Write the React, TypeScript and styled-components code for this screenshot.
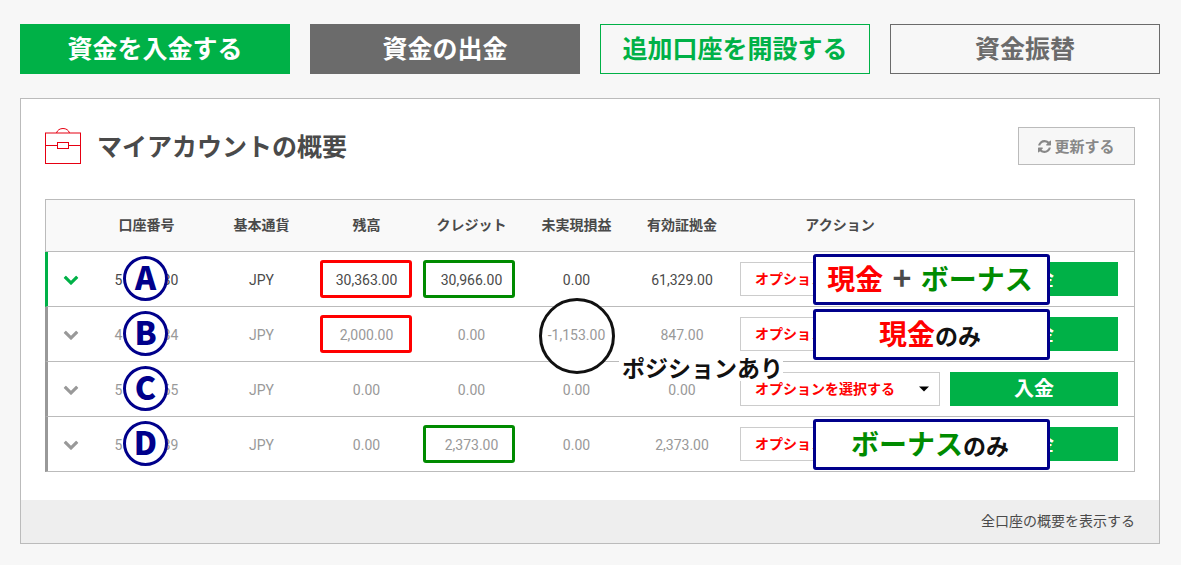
import React from "react";
import styled, { createGlobalStyle } from "styled-components";

const GREEN = "#00b147";
const GREY = "#6b6b6b";
const TEXT = "#4a4a4a";
const MUTED = "#999";
const LINE = "#bbb";
const NAVY = "#00008b";
const RED = "#f00";
const BONUS = "#008b00";

const GlobalStyle = createGlobalStyle`
  *, *::before, *::after { box-sizing: border-box; }
  body {
    margin: 0;
    background: #f7f7f7;
    color: ${TEXT};
    font-family: Roboto, "Noto Sans CJK JP", sans-serif;
    font-size: 14px;
    line-height: 20px;
  }
  button, select { font-family: inherit; cursor: pointer; }
`;

const Page = styled.main`
  padding: 24px 21px 21px 20px;
`;

const Shortcuts = styled.nav`
  display: grid;
  grid-template-columns: repeat(4, 1fr);
  gap: 20px;
  margin-bottom: 24px;
`;

const ShortcutButton = styled.button<{ $color: string; $filled?: boolean }>`
  height: 50px;
  padding: 0 0 4px;
  border: 1px solid ${(p) => p.$color};
  background: ${(p) => (p.$filled ? p.$color : "transparent")};
  color: ${(p) => (p.$filled ? "#fff" : p.$color)};
  font-family: "Noto Sans CJK JP", sans-serif;
  font-size: 25px;
  font-weight: 700;
  line-height: 36px;
`;

const Panel = styled.section`
  border: 1px solid ${LINE};
  background: #fff;
`;

const PanelBody = styled.div`
  padding: 28px 24px;
`;

const PanelHeader = styled.header`
  display: flex;
  align-items: center;
  gap: 16px;
  margin-bottom: 34px;
`;

const Title = styled.h1`
  flex: 1;
  margin: 0;
  padding-bottom: 2px;
  font-family: "Noto Sans CJK JP", sans-serif;
  font-size: 25px;
  font-weight: 700;
  line-height: 36px;
`;

const RefreshButton = styled.button`
  display: flex;
  align-items: center;
  justify-content: center;
  gap: 3px;
  width: 117px;
  height: 38px;
  padding: 0;
  border: 1px solid ${LINE};
  background: #f7f7f7;
  color: #888;
  font-size: 15px;
  font-weight: 700;
`;

const RefreshLabel = styled.span`
  padding-bottom: 2px;
`;

const PanelFooter = styled.footer`
  display: flex;
  align-items: center;
  justify-content: flex-end;
  height: 43px;
  padding: 0 24px 2px;
  background: #eee;
`;

const FooterLink = styled.a`
  color: ${TEXT};
  text-decoration: none;
`;

const AccountsTable = styled.table`
  width: 100%;
  table-layout: fixed;
  border-collapse: separate;
  border-spacing: 0;
  border-top: 1px solid ${LINE};
  border-right: 1px solid ${LINE};
`;

const Column = styled.col<{ $width: number }>`
  width: ${(p) => p.$width}px;
`;

const HeadCell = styled.th`
  height: 52px;
  padding: 0 0 2px;
  border-bottom: 1px solid ${LINE};
  background: #f9f9f9;
  font-weight: 700;
  white-space: nowrap;

  &:first-child { border-left: 1px solid ${LINE}; }
`;

const Row = styled.tr<{ $active?: boolean }>`
  color: ${(p) => (p.$active ? TEXT : MUTED)};
  --accent: ${(p) => (p.$active ? GREEN : MUTED)};
`;

const Cell = styled.td`
  position: relative;
  height: 55px;
  padding: 0;
  border-bottom: 1px solid ${LINE};
  text-align: center;
`;

const DataCell = styled(Cell)`
  padding-top: 2px;
`;

const ToggleCell = styled(Cell)`
  border-left: 3px solid var(--accent);
  text-align: left;
`;

const DepositCell = styled(Cell)`
  padding: 0 16px 0 5px;
`;

const ToggleButton = styled.button`
  display: block;
  margin-left: 15px;
  padding: 0;
  border: 0;
  background: none;
  color: var(--accent);

  svg { display: block; }
`;

const AccountNumber = styled.span`
  display: inline-flex;
  justify-content: space-between;
  width: 64px;
`;

const Badge = styled.span`
  position: absolute;
  top: 4px;
  left: 39px;
  width: 45px;
  height: 45px;
  border: 3px solid ${NAVY};
  border-radius: 50%;
  background: #fff;
  color: ${NAVY};
  font-family: "Noto Sans CJK JP", sans-serif;
  font-size: 32px;
  font-weight: 900;
  line-height: 35px;
`;

const Frame = styled.span<{ $tone: "cash" | "bonus" }>`
  position: absolute;
  top: 8px;
  left: ${(p) => (p.$tone === "cash" ? 6 : 4)}px;
  width: 92px;
  height: 38px;
  border: 3px solid ${(p) => (p.$tone === "cash" ? RED : BONUS)};
  border-radius: 3px;
`;

const Ring = styled.span`
  position: absolute;
  top: -9px;
  left: 15px;
  width: 76px;
  height: 76px;
  border: 3px solid #111;
  border-radius: 50%;
  background: #fff;
`;

const Amount = styled.span`
  position: relative;
  z-index: 1;
`;

const PositionNote = styled.strong`
  position: absolute;
  z-index: 3;
  top: 48px;
  left: 95px;
  padding: 0 0 2px 3px;
  background: #fff;
  color: #111;
  font-family: "Noto Sans CJK JP", sans-serif;
  font-size: 23px;
  font-weight: 700;
  line-height: 24px;
  white-space: nowrap;
`;

const SelectBox = styled.div`
  position: relative;
  margin: 0 5px;

  svg {
    position: absolute;
    top: 14px;
    right: 11px;
    pointer-events: none;
  }
`;

const OptionSelect = styled.select`
  display: block;
  width: 100%;
  height: 34px;
  padding: 0 28px 0 14px;
  appearance: none;
  border: 1px solid #ccc;
  border-radius: 0;
  background: #fff;
  color: ${RED};
  font-size: 14px;
  font-weight: 700;
`;

const DepositButton = styled.button`
  display: block;
  width: 100%;
  height: 34px;
  padding: 0 0 2px;
  border: 0;
  background: ${GREEN};
  color: #fff;
  font-family: "Noto Sans CJK JP", sans-serif;
  font-size: 20px;
  font-weight: 700;
  line-height: 32px;
`;

const Callout = styled.div`
  position: absolute;
  z-index: 2;
  top: 2px;
  left: 78px;
  width: 237px;
  height: 51px;
  padding-right: 3px;
  border: 3px solid ${NAVY};
  border-radius: 3px;
  background: #fff;
  color: ${TEXT};
  font-family: "Noto Sans CJK JP", sans-serif;
  font-size: 28px;
  font-weight: 700;
  line-height: 42px;
  white-space: nowrap;
`;

const Cash = styled.span`
  color: ${RED};
`;

const Bonus = styled.span`
  color: ${BONUS};
`;

const Plus = styled.span`
  margin: 0 3px;
  font-size: 32px;
  line-height: 32px;
`;

const Only = styled.span`
  color: #111;
  font-size: 23px;
`;

const BriefcaseIcon = () => (
  <svg width="36" height="36" viewBox="0 0 36 36" fill="none" stroke="#e60012" aria-hidden="true">
    <path d="M11.5 5C12.3 2 15 .5 18 .5S23.700 2 24.500 5" />
    <rect x="0.500" y="5" width="35" height="30.500" />
    <path d="M0 17.500H12.500M23.500 17.500H36" />
    <rect x="12.500" y="14.500" width="11" height="6" />
  </svg>
);

const RefreshIcon = () => (
  <svg width="13" height="13" viewBox="0 0 1536 1536" fill="currentColor" aria-hidden="true">
    <path d="M1511 928q0 5-1 7-64 268-268 434.500t-478 166.500q-146 0-282.500-55t-243.500-157l-129 129q-19 19-45 19t-45-19-19-45v-448q0-26 19-45t45-19h448q26 0 45 19t19 45-19 45l-137 137q71 66 161 102t187 36q134 0 250-65t186-179q11-17 53-117 8-23 30-23h192q13 0 22.500 9.500t9.500 22.500zm25-800v448q0 26-19 45t-45 19h-448q-26 0-45-19t-19-45 19-45l138-138q-148-137-349-137-134 0-250 65t-186 179q-11 17-53 117-8 23-30 23h-199q-13 0-22.500-9.500t-9.500-22.500v-7q65-268 270-434.500t480-166.500q146 0 284 55.500t245 156.500l130-129q19-19 45-19t45 19 19 45z" />
  </svg>
);

const ChevronIcon = () => (
  <svg width="16" height="16" viewBox="0 0 1792 1792" fill="currentColor" aria-hidden="true">
    <path d="M1683 808l-742 741q-19 19-45 19t-45-19l-742-741q-19-19-19-45.500t19-45.500l166-165q19-19 45-19t45 19l531 531 531-531q19-19 45-19t45 19l166 165q19 19 19 45.500t-19 45.500z" />
  </svg>
);

const CaretIcon = () => (
  <svg width="10" height="6" viewBox="0 0 10 6" aria-hidden="true">
    <path d="M0 .5H10L5 5.500Z" fill="#000" />
  </svg>
);

type Account = {
  badge: string;
  number: [string, string];
  balance: string;
  credit: string;
  profit: string;
  equity: string;
  active?: boolean;
  cash?: boolean;
  bonus?: boolean;
  position?: boolean;
  callout?: React.ReactNode;
};

const accounts: Account[] = [
  {
    badge: "A", number: ["5", "30"], balance: "30,363.00", credit: "30,966.00",
    profit: "0.00", equity: "61,329.00", active: true, cash: true, bonus: true,
    callout: <><Cash>現金</Cash> <Plus>+</Plus> <Bonus>ボーナス</Bonus></>,
  },
  {
    badge: "B", number: ["4", "34"], balance: "2,000.00", credit: "0.00",
    profit: "-1,153.00", equity: "847.00", cash: true, position: true,
    callout: <><Cash>現金</Cash><Only>のみ</Only></>,
  },
  {
    badge: "C", number: ["5", "65"], balance: "0.00", credit: "0.00",
    profit: "0.00", equity: "0.00",
  },
  {
    badge: "D", number: ["5", "39"], balance: "0.00", credit: "2,373.00",
    profit: "0.00", equity: "2,373.00", bonus: true,
    callout: <><Bonus>ボーナス</Bonus><Only>のみ</Only></>,
  },
];

const columnWidths = [39, 125, 105, 105, 105, 105, 106, 210, 189];
const headings = ["", "口座番号", "基本通貨", "残高", "クレジット", "未実現損益", "有効証拠金", "アクション", ""];

const AccountRow = ({ account: a }: { account: Account }) => (
  <Row $active={a.active}>
    <ToggleCell>
      <ToggleButton type="button" aria-label={`口座 ${a.badge} の詳細`}><ChevronIcon /></ToggleButton>
    </ToggleCell>
    <DataCell>
      <AccountNumber><span>{a.number[0]}</span><span>{a.number[1]}</span></AccountNumber>
      <Badge>{a.badge}</Badge>
    </DataCell>
    <DataCell>JPY</DataCell>
    <DataCell>{a.balance}{a.cash && <Frame $tone="cash" />}</DataCell>
    <DataCell>{a.credit}{a.bonus && <Frame $tone="bonus" />}</DataCell>
    <DataCell>
      {a.position && <Ring />}
      <Amount>{a.profit}</Amount>
      {a.position && <PositionNote>ポジションあり</PositionNote>}
    </DataCell>
    <DataCell>{a.equity}</DataCell>
    <Cell>
      <SelectBox>
        <OptionSelect aria-label={`口座 ${a.badge} のアクション`}>
          <option>オプションを選択する</option>
        </OptionSelect>
        <CaretIcon />
      </SelectBox>
      {a.callout && <Callout>{a.callout}</Callout>}
    </Cell>
    <DepositCell><DepositButton type="button">入金</DepositButton></DepositCell>
  </Row>
);

export default function App() {
  return (
    <>
      <GlobalStyle />
      <Page lang="ja">
        <Shortcuts>
          <ShortcutButton type="button" $color={GREEN} $filled>資金を入金する</ShortcutButton>
          <ShortcutButton type="button" $color={GREY} $filled>資金の出金</ShortcutButton>
          <ShortcutButton type="button" $color={GREEN}>追加口座を開設する</ShortcutButton>
          <ShortcutButton type="button" $color={GREY}>資金振替</ShortcutButton>
        </Shortcuts>
        <Panel>
          <PanelBody>
            <PanelHeader>
              <BriefcaseIcon />
              <Title>マイアカウントの概要</Title>
              <RefreshButton type="button"><RefreshIcon /><RefreshLabel>更新する</RefreshLabel></RefreshButton>
            </PanelHeader>
            <AccountsTable>
              <colgroup>
                {columnWidths.map((w, i) => <Column key={i} $width={w} />)}
              </colgroup>
              <thead>
                <tr>{headings.map((h, i) => <HeadCell key={i} scope="col">{h}</HeadCell>)}</tr>
              </thead>
              <tbody>
                {accounts.map((a) => <AccountRow key={a.badge} account={a} />)}
              </tbody>
            </AccountsTable>
          </PanelBody>
          <PanelFooter><FooterLink href="#accounts">全口座の概要を表示する</FooterLink></PanelFooter>
        </Panel>
      </Page>
    </>
  );
}
